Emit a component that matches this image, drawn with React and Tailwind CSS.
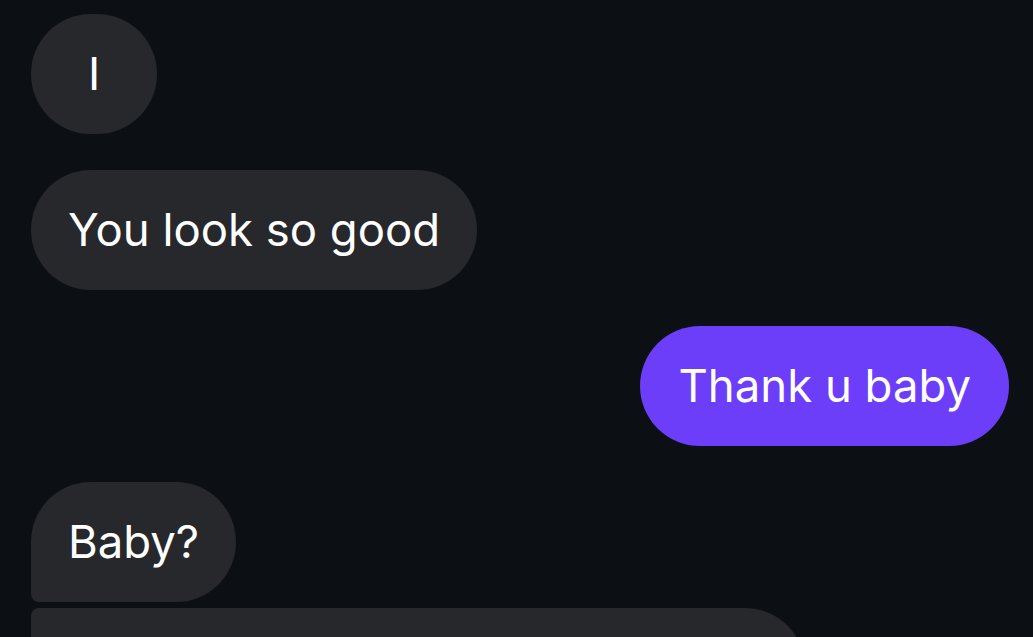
export default function App() {
    return (
        <div className="h-[637px] w-[1033px] overflow-hidden bg-[#0c1014] pl-[31px] pr-[24px] pt-[14px] text-white" style={{ fontFamily: "Inter, 'Noto Sans', sans-serif" }}>
            <div className="flex flex-col items-start text-[45.5px] leading-none">
                <div className="flex h-[120px] w-[126px] items-center justify-center rounded-[60px] bg-[#26282c]">I</div>

                <div className="mt-[36px] flex h-[120px] items-center rounded-[60px] bg-[#26282c] px-[37px]">You look so good</div>

                <div className="mt-[36px] flex h-[120px] items-center self-end rounded-[60px] bg-[#6c3ef9] px-[38px]">Thank u baby</div>

                <div className="mt-[36px] flex h-[120px] items-center rounded-[60px] rounded-bl-[8px] bg-[#26282c] px-[37px]">Baby?</div>

                <div className="mt-[6px] h-[120px] w-[774px] rounded-[60px] rounded-tl-[8px] bg-[#26282c]" />
            </div>
        </div>
    );
}
